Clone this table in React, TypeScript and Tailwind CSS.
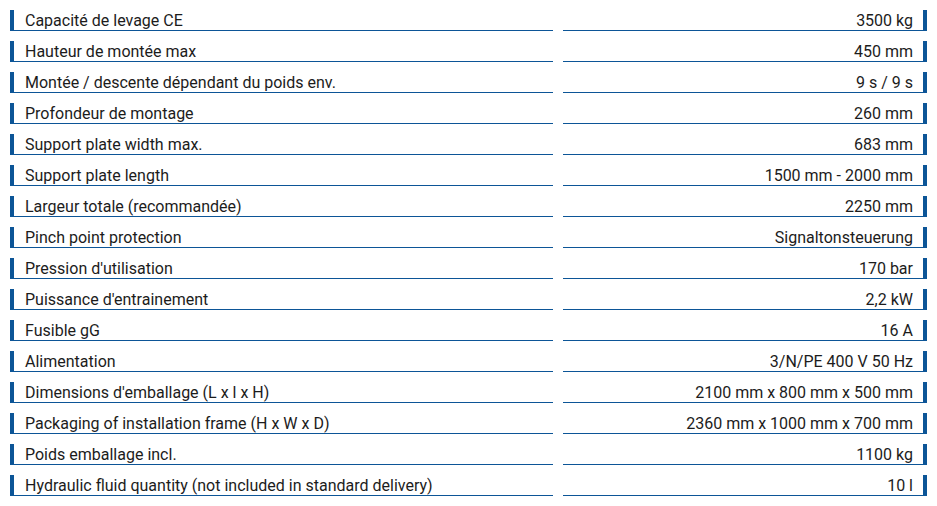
const specs: [string, string][] = [
  ["Capacité de levage CE", "3500 kg"],
  ["Hauteur de montée max", "450 mm"],
  ["Montée / descente dépendant du poids env.", "9 s / 9 s"],
  ["Profondeur de montage", "260 mm"],
  ["Support plate width max.", "683 mm"],
  ["Support plate length", "1500 mm - 2000 mm"],
  ["Largeur totale (recommandée)", "2250 mm"],
  ["Pinch point protection", "Signaltonsteuerung"],
  ["Pression d'utilisation", "170 bar"],
  ["Puissance d'entrainement", "2,2 kW"],
  ["Fusible gG", "16 A"],
  ["Alimentation", "3/N/PE 400 V 50 Hz"],
  ["Dimensions d'emballage (L x l x H)", "2100 mm x 800 mm x 500 mm"],
  ["Packaging of installation frame (H x W x D)", "2360 mm x 1000 mm x 700 mm"],
  ["Poids emballage incl.", "1100 kg"],
  ["Hydraulic fluid quantity (not included in standard delivery)", "10 l"],
];

export default function App() {
  return (
    <div className="min-h-[506px] bg-white px-[10px] pt-[10px] font-['Roboto',sans-serif] text-[16px] text-[#1c1c1c]">
      <div className="grid grid-cols-[543px_364px] gap-x-[10px] gap-y-[10px]">
        {specs.map(([label, value]) => (
          <div key={label} className="contents">
            <div className="flex h-[21px] items-center border-b border-l-4 border-[#0c5597] pl-[11px] pt-[2px] leading-[20px]">
              {label}
            </div>
            <div className="flex h-[21px] items-center justify-end border-b border-r-4 border-[#0c5597] pr-[10px] pt-[2px] leading-[20px]">
              {value}
            </div>
          </div>
        ))}
      </div>
    </div>
  );
}
